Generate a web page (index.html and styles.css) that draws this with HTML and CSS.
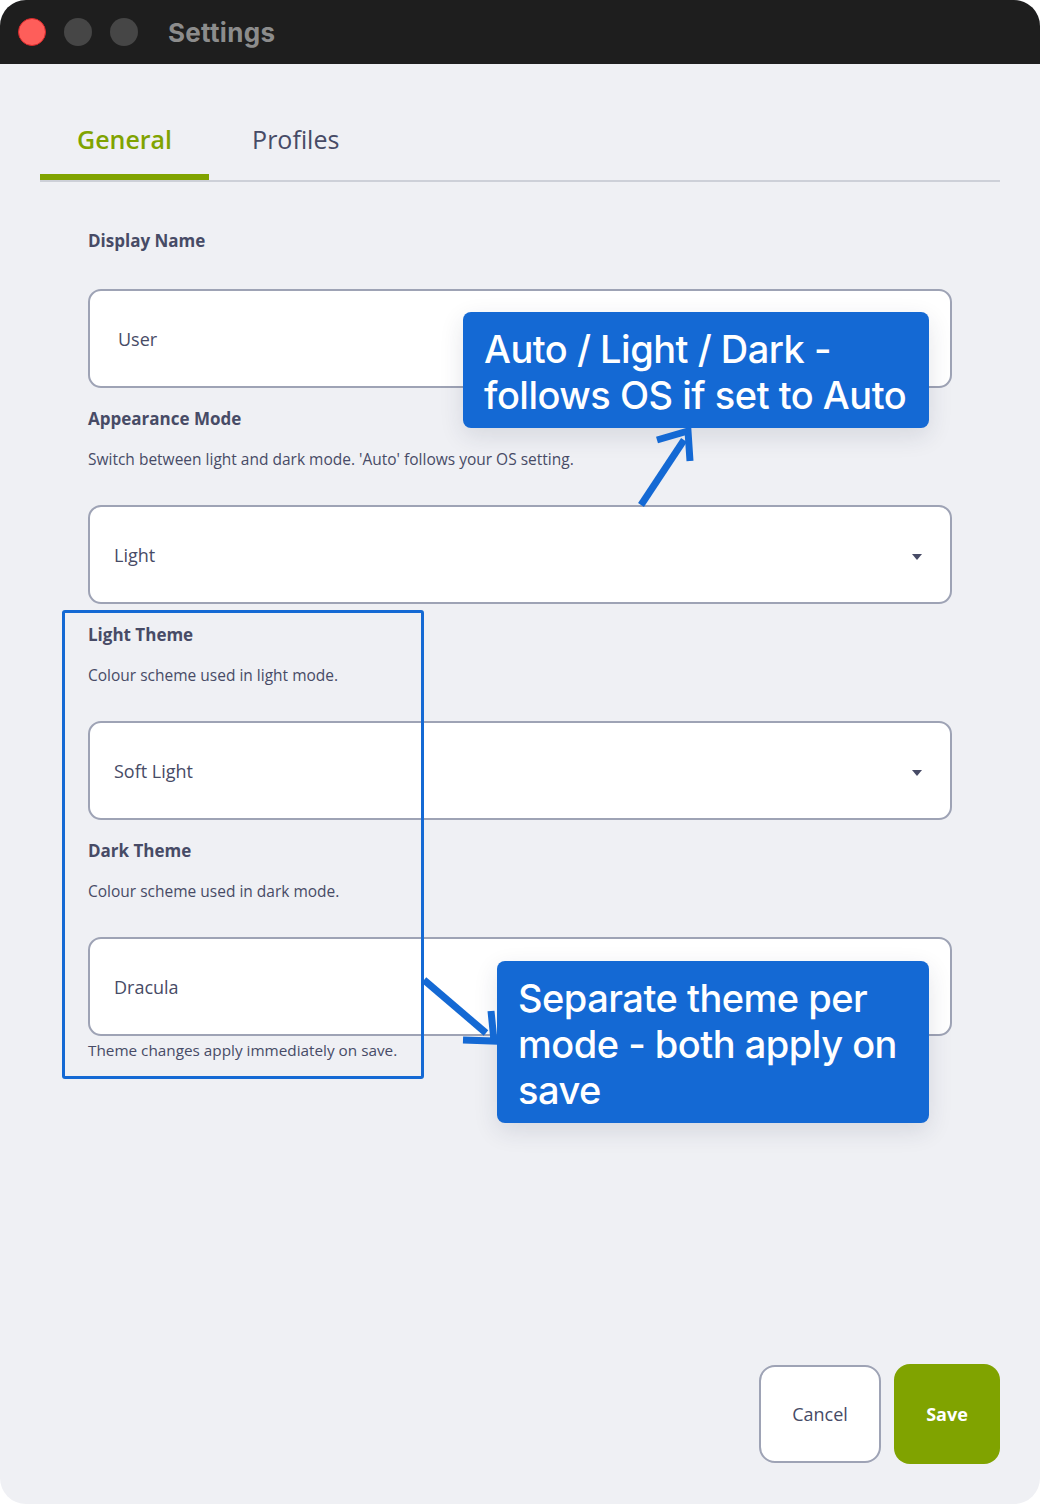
FILE: index.html
```html
<!DOCTYPE html>
<html>
<head>
<meta charset="utf-8">
<link rel="stylesheet" href="styles.css">
</head>
<body>
<div class="window">
  <div class="titlebar">
    <span class="light red"></span>
    <span class="light"></span>
    <span class="light"></span>
    <span class="title">Settings</span>
  </div>
  <div class="content">
    <div class="tabs">
      <div class="tab active">General</div>
      <div class="tab">Profiles</div>
    </div>
    <div class="form">
      <div class="field">
        <div class="label">Display Name</div>
        <div class="control input">User</div>
      </div>
      <div class="field">
        <div class="label">Appearance Mode</div>
        <div class="desc">Switch between light and dark mode. 'Auto' follows your OS setting.</div>
        <div class="control select">Light<span class="caret"></span></div>
      </div>
      <div class="field">
        <div class="label">Light Theme</div>
        <div class="desc">Colour scheme used in light mode.</div>
        <div class="control select">Soft Light<span class="caret"></span></div>
      </div>
      <div class="field">
        <div class="label">Dark Theme</div>
        <div class="desc">Colour scheme used in dark mode.</div>
        <div class="control select">Dracula<span class="caret"></span></div>
        <div class="note">Theme changes apply immediately on save.</div>
      </div>
    </div>
  </div>
  <div class="footer">
    <button class="btn cancel">Cancel</button>
    <button class="btn save">Save</button>
  </div>

  <div class="highlight"></div>
  <div class="callout callout-1">Auto / Light / Dark -<br>follows OS if set to Auto</div>
  <div class="callout callout-2">Separate theme per<br>mode - both apply on<br>save</div>
  <svg class="arrows" width="1040" height="1504" viewBox="0 0 1040 1504">
    <g stroke="#1469d4" stroke-width="7" fill="none" stroke-linecap="butt">
      <line x1="641" y1="505" x2="684" y2="440"/>
      <polyline points="657,440 688,431 690,461" stroke-linejoin="miter"/>
      <line x1="424" y1="980" x2="486" y2="1033"/>
      <polyline points="463,1040 494,1041 491,1011" stroke-linejoin="miter"/>
    </g>
  </svg>
</div>
</body>
</html>
```

FILE: styles.css
```css
* { box-sizing: border-box; }
html, body { margin: 0; padding: 0; background: #ffffff; }
body { width: 1040px; height: 1504px; }

.window {
  position: relative;
  width: 1040px;
  height: 1504px;
  border-radius: 26px;
  overflow: hidden;
  background: #eff0f4;
  display: flex;
  flex-direction: column;
  font-family: "Open Sans", "Noto Sans", sans-serif;
  color: #474b66;
}

.titlebar {
  height: 64px;
  background: #1e1e1e;
  display: flex;
  align-items: center;
  padding-left: 18px;
  gap: 18px;
  flex-shrink: 0;
}
.light {
  width: 28px;
  height: 28px;
  border-radius: 50%;
  background: #464646;
}
.light.red {
  background: #fe5e5a;
  border: 1px solid #d8292b;
}
.title {
  margin-left: 12px;
  font-family: "Inter", "Liberation Sans", sans-serif;
  font-weight: 700;
  font-size: 26px;
  color: #8c8c8c;
  letter-spacing: 0.3px;
}

.content { flex: 1; padding: 0 40px; }

.tabs {
  margin-top: 40px;
  display: flex;
  border-bottom: 2px solid #cdd0d8;
}
.tab {
  height: 76px;
  padding: 0 37px;
  display: flex;
  align-items: center;
  font-size: 25px;
  font-weight: 500;
  color: #474b66;
  border-bottom: 6px solid transparent;
}
.tab.active {
  color: #80a300;
  font-weight: 600;
  border-bottom-color: #80a300;
}
.tab + .tab { padding-left: 43px; }

.form {
  padding: 47px 48px 0 48px;
  display: flex;
  flex-direction: column;
  gap: 19px;
}
.label {
  font-size: 17px;
  font-weight: 700;
  line-height: 24px;
}
.desc {
  margin-top: 17px;
  font-size: 15.5px;
  font-weight: 500;
  line-height: 22px;
}
.control {
  margin-top: 36px;
  height: 99px;
  background: #ffffff;
  border: 2px solid #9ea3b5;
  border-radius: 13px;
  display: flex;
  align-items: center;
  font-size: 18px;
  font-weight: 500;
  position: relative;
}
.desc + .control { margin-top: 35px; }
.input { padding-left: 28px; }
.select { padding-left: 24px; }
.caret {
  position: absolute;
  right: 28px;
  top: 47px;
  width: 0;
  height: 0;
  border-left: 5.5px solid transparent;
  border-right: 5.5px solid transparent;
  border-top: 6px solid #474b66;
}
.note {
  margin-top: 4px;
  font-size: 15.3px;
  font-weight: 500;
  line-height: 20px;
}

.footer {
  display: flex;
  justify-content: flex-end;
  align-items: center;
  gap: 13px;
  padding: 0 40px 40px 0;
}
.btn {
  font-family: "Open Sans", "Noto Sans", sans-serif;
  font-size: 18px;
  border-radius: 16px;
  cursor: pointer;
}
.cancel {
  width: 122px;
  height: 98px;
  background: #ffffff;
  border: 2px solid #9ea3b5;
  color: #474b66;
  font-weight: 500;
}
.save {
  width: 106px;
  height: 100px;
  background: #80a300;
  border: none;
  color: #ffffff;
  font-weight: 700;
}

.highlight {
  position: absolute;
  left: 62px;
  top: 610px;
  width: 362px;
  height: 469px;
  border: 3px solid #1469d4;
  border-radius: 3px;
}
.callout {
  position: absolute;
  background: #1469d4;
  color: #ffffff;
  font-family: "Inter", "Liberation Sans", sans-serif;
  font-weight: 500;
  font-size: 38px;
  line-height: 46px;
  white-space: nowrap;
  border-radius: 8px;
  padding: 14px 0 0 21px;
  box-shadow: 0 8px 24px rgba(30, 40, 70, 0.12);
  letter-spacing: -0.5px;
}
.callout-1 { left: 463px; top: 312px; width: 466px; height: 116px; }
.callout-2 { left: 497px; top: 961px; width: 432px; height: 162px; }
.arrows { position: absolute; left: 0; top: 0; pointer-events: none; }
```
